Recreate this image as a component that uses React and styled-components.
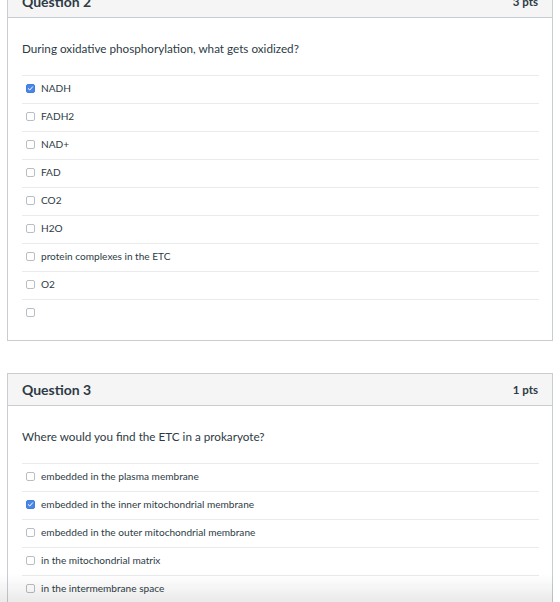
import React from "react";
import styled, { createGlobalStyle } from "styled-components";

const Global = createGlobalStyle`
  html, body { margin: 0; padding: 0; background: #fff; }
  body { font-family: Lato, "Open Sans", "Liberation Sans", sans-serif; color: #2d3b45; overflow: hidden; }
`;

const Page = styled.div`
  width: 546px;
  padding-left: 7px;
  display: flex;
  flex-direction: column;
  gap: 32px;
  margin-top: -15px;
`;

const Card = styled.section`
  border: 1px solid #c7cdd1;
  background: #fff;
`;

const Header = styled.header`
  height: 31px;
  background: #f5f5f5;
  border-bottom: 1px solid #c7cdd1;
  display: flex;
  align-items: center;
  justify-content: space-between;
  padding: 0 14px;
`;

const Title = styled.h2`
  margin: 0;
  font-size: 14px;
  font-weight: 700;
  color: #2d3b45;
`;

const Points = styled.span`
  font-size: 11.5px;
  font-weight: 700;
  color: #2d3b45;
`;

const Body = styled.div`
  padding: 22px 13px 13px 14px;
`;

const Prompt = styled.p`
  margin: 0 0 19px;
  font-size: 11.7px;
  line-height: 16px;
  color: #2d3b45;
`;

const Answers = styled.ul`
  list-style: none;
  margin: 0;
  padding: 0;
`;

const Answer = styled.li`
  box-sizing: border-box;
  border-top: 1px solid #e8eaec;
  height: 28px;
  padding: 0 0 3px 4px;
  display: flex;
  align-items: center;
  gap: 6px;
  font-size: 10.1px;
  color: #2d3b45;
`;

const Box = styled.span`
  width: 9px;
  height: 9px;
  border-radius: 2px;
  box-sizing: border-box;
  flex: none;
  display: inline-flex;
  align-items: center;
  justify-content: center;
  border: 1px solid ${(p) => (p.$checked ? "#3f7ee0" : "#b8bec4")};
  background: ${(p) => (p.$checked ? "#4a86e8" : "#fff")};
`;

/* soft shade along the bottom edge of the viewport */
const Fade = styled.div`
  position: fixed;
  left: 0;
  bottom: 0;
  width: 553px;
  height: 28px;
  pointer-events: none;
  mix-blend-mode: multiply;
  background: linear-gradient(rgba(238, 238, 238, 0), rgba(234, 234, 234, 1));
`;

const Check = () => (
  <svg width="7" height="7" viewBox="0 0 7 7">
    <path d="M1.3 3.6 L2.8 5 L5.6 1.8" fill="none" stroke="#fff" strokeWidth="1" strokeLinecap="round" />
  </svg>
);

const Option = ({ checked, children }) => (
  <Answer>
    <Box $checked={checked}>{checked && <Check />}</Box>
    <span>{children}</span>
  </Answer>
);

const questions = [
  {
    title: "Question 2",
    pts: "3 pts",
    prompt: "During oxidative phosphorylation, what gets oxidized?",
    options: ["NADH", "FADH2", "NAD+", "FAD", "CO2", "H2O", "protein complexes in the ETC", "O2", ""],
    checked: [0],
  },
  {
    title: "Question 3",
    pts: "1 pts",
    prompt: "Where would you find the ETC in a prokaryote?",
    options: [
      "embedded in the plasma membrane",
      "embedded in the inner mitochondrial membrane",
      "embedded in the outer mitochondrial membrane",
      "in the mitochondrial matrix",
      "in the intermembrane space",
    ],
    checked: [1],
  },
];

export default function App() {
  return (
    <>
      <Global />
      <Page>
        {questions.map((q) => (
          <Card key={q.title}>
            <Header>
              <Title>{q.title}</Title>
              <Points>{q.pts}</Points>
            </Header>
            <Body>
              <Prompt>{q.prompt}</Prompt>
              <Answers>
                {q.options.map((o, i) => (
                  <Option key={i} checked={q.checked.includes(i)}>
                    {o}
                  </Option>
                ))}
              </Answers>
            </Body>
          </Card>
        ))}
      </Page>
      <Fade />
    </>
  );
}
